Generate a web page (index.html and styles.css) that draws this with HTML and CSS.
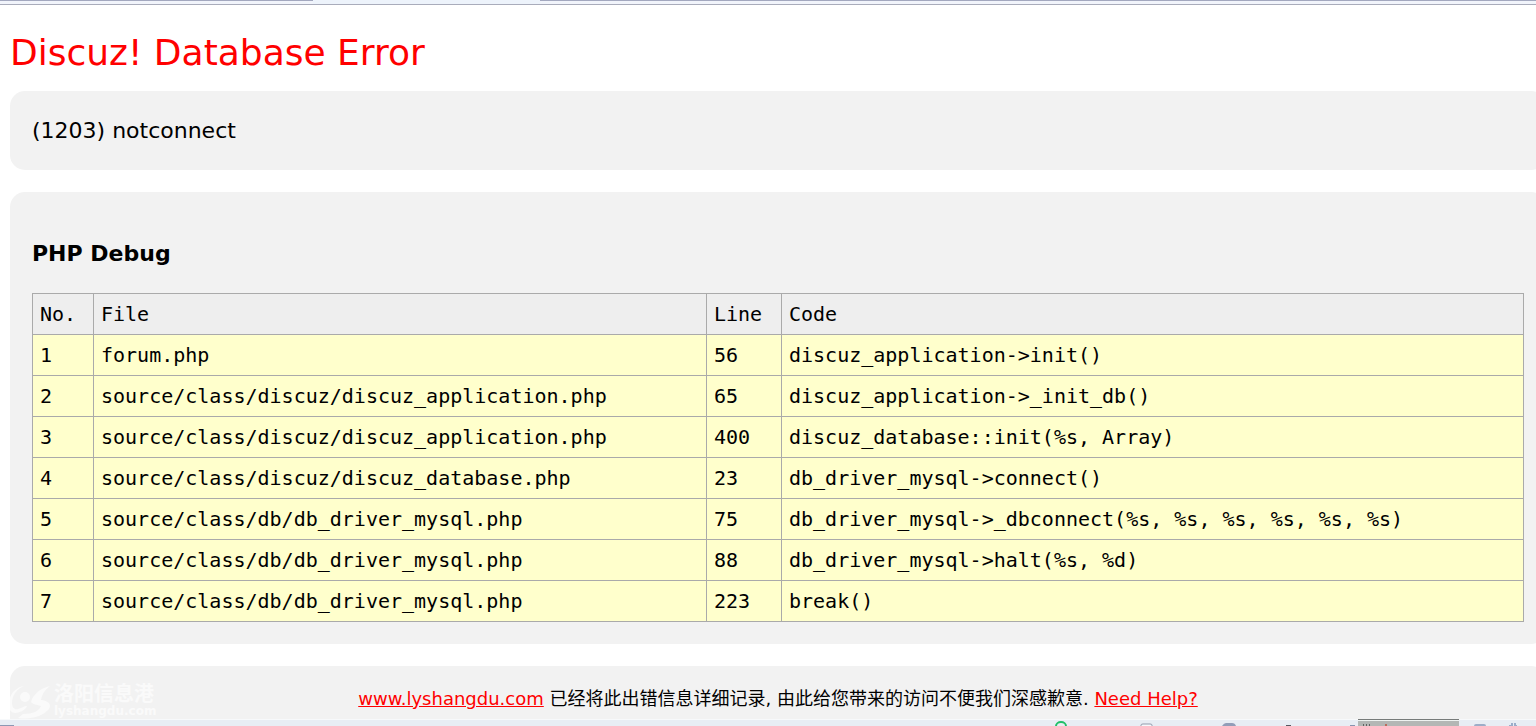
FILE: index.html
```
<!DOCTYPE html>
<html lang="zh-CN">
<head>
<meta charset="utf-8">
<title>Discuz! Database Error</title>
<link rel="stylesheet" href="styles.css">
</head>
<body>
<div class="tabstrip"><span class="tabstrip-left"></span><span class="tabstrip-active"></span><span class="tabstrip-rest"></span></div>
<main class="page">
  <h1 class="title">Discuz! Database Error</h1>
  <section class="panel message">(1203) notconnect</section>
  <section class="panel debug">
    <h2 class="heading">PHP Debug</h2>
    <table class="trace">
      <colgroup><col class="col-no"><col class="col-file"><col class="col-line"><col></colgroup>
      <thead><tr><th>No.</th><th>File</th><th>Line</th><th>Code</th></tr></thead>
      <tbody>
        <tr><td>1</td><td>forum.php</td><td>56</td><td>discuz_application-&gt;init()</td></tr>
        <tr><td>2</td><td>source/class/discuz/discuz_application.php</td><td>65</td><td>discuz_application-&gt;_init_db()</td></tr>
        <tr><td>3</td><td>source/class/discuz/discuz_application.php</td><td>400</td><td>discuz_database::init(%s, Array)</td></tr>
        <tr><td>4</td><td>source/class/discuz/discuz_database.php</td><td>23</td><td>db_driver_mysql-&gt;connect()</td></tr>
        <tr><td>5</td><td>source/class/db/db_driver_mysql.php</td><td>75</td><td>db_driver_mysql-&gt;_dbconnect(%s, %s, %s, %s, %s, %s)</td></tr>
        <tr><td>6</td><td>source/class/db/db_driver_mysql.php</td><td>88</td><td>db_driver_mysql-&gt;halt(%s, %d)</td></tr>
        <tr><td>7</td><td>source/class/db/db_driver_mysql.php</td><td>223</td><td>break()</td></tr>
      </tbody>
    </table>
  </section>
  <footer class="panel help"><a href="#">www.lyshangdu.com</a> 已经将此出错信息详细记录, 由此给您带来的访问不便我们深感歉意. <a href="#">Need Help?</a></footer>
  <div class="watermark">
    <svg width="42" height="36" viewBox="0 0 42 36" aria-hidden="true">
      <path d="M14 3C7 6 2 12 2 20c0 5 3 7 6 6 4-1 6-3 9-3-2 4-6 6-11 7-3 0-5-1-6-3V15C2 9 7 4 14 3z"/>
      <circle cx="15" cy="14" r="5"/>
      <path d="M40 3C31 5 23 11 21 19c2 3 8 3 10 4-2 5-8 8-18 8l-5 4c13 2 25-2 31-9 3-5-1-8-8-9 1-6 4-10 9-14z"/>
    </svg>
    <div><div class="watermark-name">洛阳信息港</div><div class="watermark-site">lyshangdu.com</div></div>
  </div>
</main>
<div class="taskbar">
  <span class="start"></span>
  <svg class="tray" width="506" height="7" viewBox="0 0 506 7" aria-hidden="true">
    <path d="M26 7a5 4 0 0 1 10 0" fill="none" stroke="#20c068" stroke-width="2"/>
    <path d="M111 7V6q0-1 2-1h7q2 0 2 1v1" fill="#f6f8fb" stroke="#929bad"/>
    <path d="M192 7q2-3 4-3h6q3 0 4 3z" fill="#929db8"/>
    <path d="M256 6h5v1h-5z" fill="#555961"/>
    <path d="M320 6h5v1h-5z" fill="#8794b0"/>
    <path d="M328 2h101v5H328z" fill="#b3b7b5"/>
    <path d="M328 0h101v1H328z" fill="#777b7a"/>
    <path d="M328 1h101v1H328z" fill="#eef3f1"/>
    <path d="M333 5h1v2h-1zm3 0h1v2h-1zm3 0h1v2h-1z" fill="#606462"/>
    <path d="M355 5h2v2h-2z" fill="#b96c5c"/>
    <path d="M444 7q0-2 2-2h8q2 0 2 2z" fill="#9dadc8"/>
    <path d="M479 6h2V4h2v3h1V4h2v2h1v1h-8z" fill="#9badca"/>
  </svg>
</div>
</body>
</html>
```

FILE: styles.css
```
* {
  box-sizing: border-box;
}

body {
  display: flex;
  flex-direction: column;
  height: 100vh;
  margin: 0;
  overflow: hidden;
  background: #fff;
  color: #000;
  font-family: Verdana, "DejaVu Sans", "Noto Sans CJK SC", sans-serif;
}

.tabstrip {
  display: flex;
  flex: none;
  height: 5px;
  background: #f1f4fb;
  border-bottom: 1px solid #a9acbb;
}

.tabstrip-left {
  width: 313px;
  border-top: 1px solid #a3a8bf;
}

.tabstrip-active {
  width: 227px;
  background: #edf3fb;
}

.tabstrip-rest {
  flex: 1;
  border-top: 1px solid #a3a8bf;
}

/* The panels run past the right edge of the window. */
.page {
  position: relative;
  flex: 1;
  min-height: 0;
  margin-right: -10px;
  padding: 22px 0 0 10px;
  overflow: hidden;
}

.title {
  margin: 0 0 12px;
  color: #f00;
  font-size: 36px;
  font-weight: 400;
  line-height: 52px;
}

.panel {
  margin-bottom: 22px;
  padding: 22px;
  border-radius: 15px;
  background: #f2f2f2;
}

.message {
  font-size: 22px;
  line-height: 35px;
}

.heading {
  margin: 22px 0;
  font-size: 22px;
  line-height: 35px;
}

.trace {
  width: 100%;
  table-layout: fixed;
  border-collapse: collapse;
  background: #ffc;
  font-family: Consolas, "DejaVu Sans Mono", monospace;
  font-size: 20px;
  line-height: 26px;
}

.trace th,
.trace td {
  padding: 7px;
  border: 1px solid #aaa;
  font-weight: 400;
  text-align: left;
}

.trace th {
  background: #eee;
}

.col-no {
  width: 61px;
}

.col-file {
  width: 613px;
}

.col-line {
  width: 75px;
}

.help {
  font-size: 18px;
  line-height: 22px;
  text-align: center;
}

.help a {
  color: #f00;
}

.watermark {
  position: absolute;
  bottom: 0;
  left: 10px;
  display: flex;
  gap: 2px;
  align-items: center;
  color: #fafafa;
  fill: #fafafa;
}

.watermark-name {
  font-family: "Noto Sans CJK SC", sans-serif;
  font-size: 20px;
  font-weight: 700;
  line-height: 20px;
}

.watermark-site {
  font-family: "DejaVu Sans", sans-serif;
  font-size: 12px;
  font-weight: 700;
  line-height: 16px;
}

.taskbar {
  display: flex;
  flex: none;
  justify-content: space-between;
  align-items: flex-end;
  height: 7px;
  border-top: 1px solid #f7f9fb;
  background: #e8edf4;
}

.start {
  width: 14px;
  height: 1px;
  background: #8d98b3;
}

.tray {
  flex: none;
}
```
